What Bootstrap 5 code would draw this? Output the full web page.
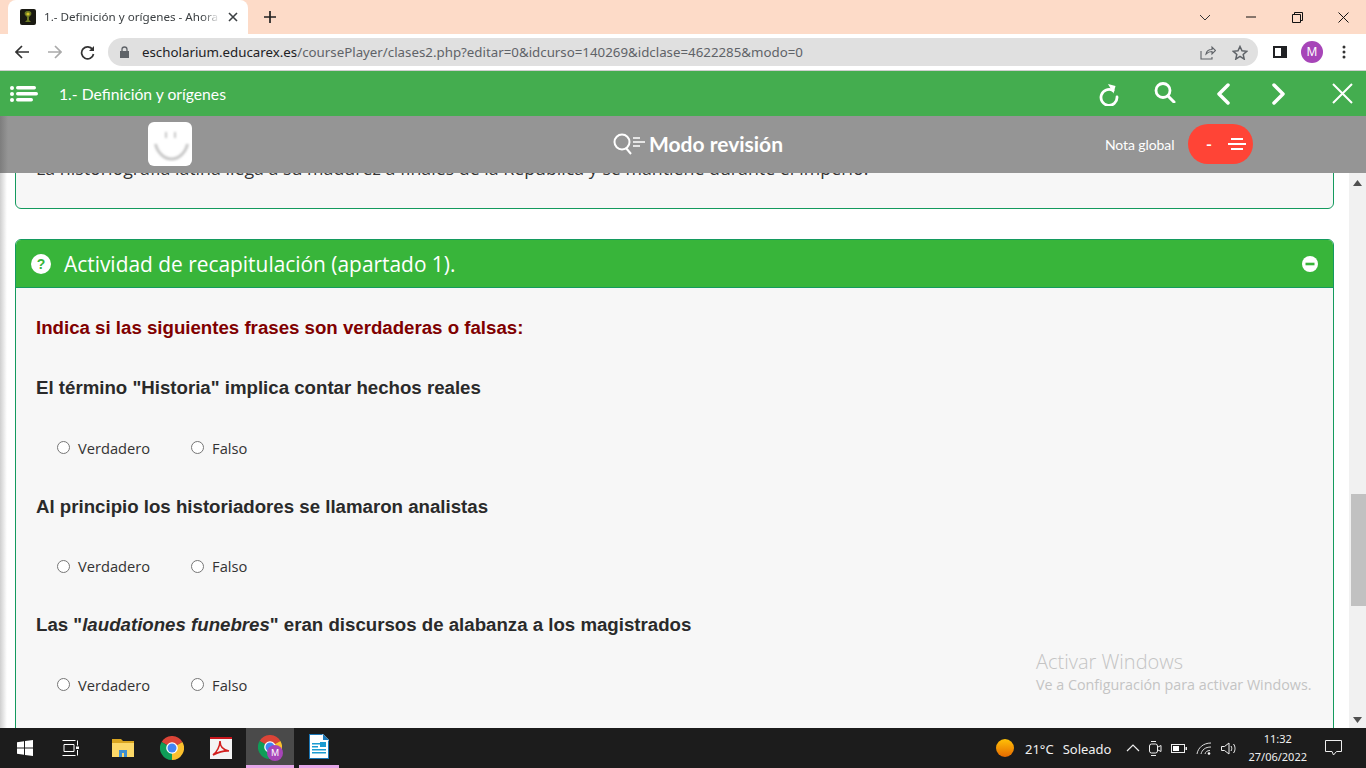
<!DOCTYPE html>
<html lang="es">
<head>
<meta charset="utf-8">
<title>1.- Definición y orígenes</title>
<link href="https://cdn.jsdelivr.net/npm/bootstrap@5.3.0/dist/css/bootstrap.min.css" rel="stylesheet">
<style>
html,body{height:100%;overflow:hidden;margin:0}
body{font-family:"Liberation Sans",sans-serif;background:#fff}
.app-root{width:1366px;height:768px}
.ui-font{font-family:"Noto Sans",sans-serif}
.tabstrip{height:34px;background:#fddbc8;flex:none}
.tab-active{position:relative;width:240px;margin-left:8px;height:34px;background:#fff;border-radius:8px 8px 0 0;padding-left:12px;font-size:11.65px;color:#3c4043;white-space:nowrap}
.tab-title{width:176px;overflow:hidden;margin-left:8px;-webkit-mask-image:linear-gradient(90deg,#000 90%,transparent)}
.tab-fav{width:16px;height:16px;background:#1a1a12;border-radius:2px;flex:none}
.new-tab{margin-left:15px}
.win-ctl{margin-left:auto;gap:0}
.win-ctl>span{width:46px;display:flex;justify-content:center}
.toolbar{height:37px;flex:none;background:#fff;border-bottom:1px solid #cfcfcf}
.tb-first{margin-left:6px}
.tb-fwd{margin-left:1px}
.tb-panel{margin-left:6px}
.tb-btn{width:32px;display:flex;justify-content:center;flex:none}
.omni{margin-left:5px;width:1150px;height:28px;background:#e0e0e0;border-radius:14px;font-size:13.3px;color:#5f6368;padding-left:12px;white-space:nowrap}
.omni b{font-weight:400;color:#202124}
.omni-url{margin-left:13px;padding-top:1px}
.omni-right{margin-left:auto;gap:16px;padding-right:10px}
.avatar{width:22px;height:22px;border-radius:50%;background:#a745b8;color:#fff;font-size:12px;line-height:22px;text-align:center}
.greenbar{height:45px;flex:none;background:#44ad4f;color:#fff;font-family:Lato,sans-serif;font-size:15.7px}
.greenbar-title{padding-top:2px}
.greenbar-menu{margin-left:10px;margin-right:21px}
.gb-tools{margin-left:auto;padding-right:13px}
.gb-reload{margin-top:2px}
.gb-search{margin-left:35px;margin-top:-3px}
.gb-prev{margin-left:40px}
.gb-next{margin-left:42px}
.gb-close{margin-left:46px}
.graybar{height:57px;flex:none;padding-bottom:1px;background:linear-gradient(90deg,#7d7d7d,#959595 8px);color:#fff;font-family:Lato,sans-serif;position:relative;z-index:2}
.smile{width:44px;height:44px;background:#fff;border-radius:6px;margin-left:148px;flex:none}
.mode-title{margin-left:421px;font-size:21px;font-weight:700;gap:3px;width:492px}
.nota{font-size:14px;letter-spacing:-.1px;width:70px;margin-right:13px;white-space:nowrap}
.nota-pill{width:65px;height:40px;background:#ff4436;border-radius:20px;font-size:16px;font-weight:700;padding-left:18px;gap:16px}
.viewport{min-height:0;position:relative}
.scroll-area{width:1349px;overflow:hidden;padding:0 15px;background:linear-gradient(90deg,#cfcfcf,#fff 7px)}
.first-card{margin-top:-40px;height:76px;background:#f7f7f7;border:1px solid #149a5e;border-radius:6px;font-family:"Open Sans",sans-serif;font-size:17.8px;line-height:24px;color:#333;padding:22px 20px 0;white-space:nowrap}
.activity{margin-top:30px;border:1px solid #149a5e;border-radius:6px 6px 0 0;background:#f7f7f7;height:600px}
.activity-head{height:48px;background:#38b53a;color:#fff;font-family:"Open Sans",sans-serif;font-size:20.9px;font-weight:500;padding:0 15px;border-bottom:1px solid #149a5e;border-radius:5px 5px 0 0}
.activity-title{margin-left:13px;padding-top:2px}
.activity-min{margin-left:auto}
.activity-body{padding:28px 20px 0;color:#222}
.lead-q{font-size:18.66px;font-weight:700;color:#800000;line-height:24px;margin-bottom:36px}
.q-text{font-size:18.66px;font-weight:700;line-height:24px;color:#2a2a2a}
.q-opts{margin:35.500px 0 35px 21px;height:24px;font-family:"Open Sans",sans-serif;font-size:14.67px;color:#333}
.q-opt{margin-right:41px;gap:8px}
.radio-mini{width:13px;height:13px;margin:0;background:#fff;border:1px solid #767676;flex:none}
.scrollbar{width:17px;background:#f1f1f1;flex:none;padding-top:7px}
.sb-thumb{width:15px;height:112px;background:#c1c1c1;margin:308px 0 0 1px}
.sb-bottom{margin-top:auto;padding-bottom:5px}
.watermark{position:absolute;left:1036px;top:476px;font-family:"Open Sans",sans-serif;color:#c4c4c4;pointer-events:none;white-space:nowrap}
.wm-a{font-size:20px;line-height:25px;font-weight:300}
.wm-b{font-size:14.3px;line-height:21px}
.taskbar{height:40px;flex:none;background:#1c1c1c;color:#f0f0f0;font-size:13px}
.task-slot{width:49px;height:40px;display:flex;align-items:center;justify-content:center;flex:none}
.task-view{padding-right:5px}
.task-on{width:48px;margin-left:1px;background:#4a4a4a;border-bottom:3px solid #e5a6e8}
.task-open{width:40px;margin-left:5px;border-bottom:3px solid #e5a6e8}
.tray{margin-left:auto;padding-right:24px}
.tray-temp{margin-left:11px;margin-right:9px;padding-top:3px}
.tray-cond{margin-right:15px;padding-top:3px}
.tray-icons{gap:9px;margin-right:11px}
.clock{font-size:11px;line-height:18px;text-align:center;margin-right:18px}
</style>
</head>
<body>
<svg width="0" height="0" class="position-absolute">
  <symbol id="chrome" viewBox="0 0 24 24">
    <path fill="#db4437" d="M12 12L1.6 6A12 12 0 0 1 22.4 6Z"/>
    <path fill="#0f9d58" d="M12 12L1.6 6A12 12 0 0 0 12 24Z"/>
    <path fill="#fbc02d" d="M12 12L22.4 6A12 12 0 0 1 12 24Z"/>
    <circle cx="12" cy="12" r="5.8" fill="#fff"/><circle cx="12" cy="12" r="4.5" fill="#4285f4"/>
  </symbol>
</svg>
<div class="app-root d-flex flex-column">

  <div class="tabstrip d-flex align-items-center">
    <div class="tab-active d-flex align-items-center ui-font">
      <svg class="tab-fav" viewBox="0 0 16 16"><path fill="#6d7a24" d="M8 2c3 0 4 2 3 4L9 8v3l2 2H5l2-2V8L5 6C4 4 5 2 8 2z"/><circle cx="8" cy="5" r="1.6" fill="#d8c528"/></svg>
      <span class="tab-title">1.- Definición y orígenes - Ahora</span>
      <svg width="10" height="10" viewBox="0 0 10 10" class="ms-2"><path d="M1 1l8 8M9 1l-8 8" stroke="#3c4043" stroke-width="1.6"/></svg>
    </div>
    <svg class="new-tab" width="14" height="14" viewBox="0 0 14 14"><path d="M7 1v12M1 7h12" stroke="#222" stroke-width="1.7"/></svg>
    <div class="win-ctl d-flex align-items-center">
      <span><svg width="12" height="7" viewBox="0 0 12 7"><path d="M1 1l5 5 5-5" fill="none" stroke="#333"/></svg></span>
      <span><svg width="10" height="2" viewBox="0 0 10 2"><path d="M0 1h10" stroke="#111"/></svg></span>
      <span><svg width="11" height="11" viewBox="0 0 11 11"><path d="M.5 2.5h8v8h-8zM2.5 2.5v-2h8v8h-2" fill="none" stroke="#111"/></svg></span>
      <span><svg width="11" height="11" viewBox="0 0 11 11"><path d="M.5.5l10 10M10.500.5l-10 10" stroke="#111"/></svg></span>
    </div>
  </div>

  <div class="toolbar d-flex align-items-center ui-font">
    <span class="tb-btn tb-first"><svg width="14" height="14" viewBox="0 0 14 14"><path d="M7 1L1 7l6 6M1 7h13" fill="none" stroke="#333" stroke-width="1.7"/></svg></span>
    <span class="tb-btn tb-fwd"><svg width="14" height="14" viewBox="0 0 14 14"><path d="M7 1l6 6-6 6M13 7H0" fill="none" stroke="#aaa" stroke-width="1.7"/></svg></span>
    <span class="tb-btn"><svg width="15" height="15" viewBox="0 0 15 15"><path d="M12.6 4.500A6 6 0 1 0 13.500 9" fill="none" stroke="#333" stroke-width="1.7"/><path fill="#333" d="M14 1v5H9z"/></svg></span>
    <div class="omni d-flex align-items-center">
      <svg width="9" height="12" viewBox="0 0 9 12"><path fill="#5f6368" d="M0 5h9v7H0z"/><path d="M2 5V3.500a2.500 2.500 0 0 1 5 0V5" fill="none" stroke="#5f6368" stroke-width="1.300"/></svg>
      <span class="omni-url"><b>escholarium.educarex.es</b>/coursePlayer/clases2.php?editar=0&amp;idcurso=140269&amp;idclase=4622285&amp;modo=0</span>
      <div class="omni-right d-flex align-items-center">
        <svg width="16" height="15" viewBox="0 0 16 15"><path d="M1 6v8h11v-2M6 9c.5-3 3-4.500 6-4.500V2l3.500 3.500L12 9V6.500C9.500 6.500 7.500 7.500 6 9z" fill="none" stroke="#5f6368" stroke-width="1.100"/></svg>
        <svg width="16" height="15" viewBox="0 0 16 15"><path d="M8 1.500l2 4.300 4.700.5-3.500 3.200 1 4.600L8 11.300l-4.200 2.800 1-4.600L1.300 6.300 6 5.800z" fill="none" stroke="#5f6368" stroke-width="1.500"/></svg>
      </div>
    </div>
    <span class="tb-btn tb-panel"><svg width="14" height="12" viewBox="0 0 14 12"><path fill="#202124" fill-rule="evenodd" d="M0 0h14v12H0zM2 2v8h6V2z"/></svg></span>
    <span class="tb-btn"><span class="avatar">M</span></span>
    <span class="tb-btn"><svg width="4" height="14" viewBox="0 0 4 14"><circle cx="2" cy="2" r="1.500" fill="#333"/><circle cx="2" cy="7" r="1.500" fill="#333"/><circle cx="2" cy="12" r="1.500" fill="#333"/></svg></span>
  </div>

  <div class="greenbar d-flex align-items-center">
    <svg class="greenbar-menu" width="28" height="16" viewBox="0 0 28 16"><g fill="#fff"><circle cx="2" cy="2" r="2"/><circle cx="2" cy="8" r="2"/><circle cx="2" cy="14" r="2"/><rect x="6" y="0" width="20" height="3.500" rx="1.700"/><rect x="6" y="6" width="22" height="3.500" rx="1.700"/><rect x="6" y="12" width="17" height="3.500" rx="1.700"/></g></svg>
    <span class="greenbar-title">1.- Definición y orígenes</span>
    <div class="gb-tools d-flex align-items-center">
      <svg class="gb-reload" width="20" height="22" viewBox="0 0 20 22"><path d="M14 6.500A8 8 0 1 0 18 13" fill="none" stroke="#fff" stroke-width="2.800" stroke-linecap="round"/><path fill="#fff" d="M9 0l7.500 2-2 7.500z"/></svg>
      <svg class="gb-search" width="22" height="21" viewBox="0 0 22 21"><circle cx="9" cy="8.500" r="7" fill="none" stroke="#fff" stroke-width="2.800"/><path d="M14 14l6 6" stroke="#fff" stroke-width="3" stroke-linecap="round"/></svg>
      <svg class="gb-prev" width="14" height="22" viewBox="0 0 14 22"><path d="M12 2L3 11l9 9" fill="none" stroke="#fff" stroke-width="3.500" stroke-linecap="round" stroke-linejoin="round"/></svg>
      <svg class="gb-next" width="14" height="22" viewBox="0 0 14 22"><path d="M2 2l9 9-9 9" fill="none" stroke="#fff" stroke-width="3.500" stroke-linecap="round" stroke-linejoin="round"/></svg>
      <svg class="gb-close" width="21" height="21" viewBox="0 0 21 21"><path d="M1 1l19 19M20 1L1 20" stroke="#fff" stroke-width="2"/></svg>
    </div>
  </div>

  <div class="graybar d-flex align-items-center">
    <svg class="smile" viewBox="0 0 44 44"><defs><filter id="sb"><feGaussianBlur stdDeviation=".8"/></filter></defs><g filter="url(#sb)" fill="none" stroke="#c8c8c8"><path d="M18 10v6M27 10v6" stroke-width="2"/><path d="M7.500 22c2 9 9 15 16 15s14-6 16-15" stroke-width="3"/></g></svg>
    <div class="mode-title d-flex align-items-center">
      <svg width="33" height="24" viewBox="0 0 33 24"><circle cx="9" cy="10" r="7.500" fill="none" stroke="#fff" stroke-width="2"/><path d="M13 16l5 6" stroke="#fff" stroke-width="2"/><path d="M20 6h7M20 10h12M20 14h7" stroke="#fff" stroke-width="1.500"/></svg>
      <span>Modo revisión</span>
    </div>
    <span class="nota">Nota global</span>
    <div class="nota-pill d-flex align-items-center"><span>-</span>
      <svg width="18" height="12" viewBox="0 0 18 12"><path d="M3 1h12M0 6h18M3 11h12" stroke="#fff" stroke-width="1.800"/></svg>
    </div>
  </div>

  <div class="viewport flex-grow-1 d-flex overflow-hidden">
    <div class="scroll-area flex-grow-1">
      <div class="first-card">La historiografía latina llega a su madurez a finales de la República y se mantiene durante el Imperio.</div>
      <div class="activity">
        <div class="activity-head d-flex align-items-center">
          <svg width="20" height="20" viewBox="0 0 20 20"><circle cx="10" cy="10" r="10" fill="#fff"/><text x="10" y="15" text-anchor="middle" font-family="Liberation Sans" font-weight="700" font-size="14" fill="#38b53a">?</text></svg>
          <span class="activity-title">Actividad de recapitulación (apartado 1).</span>
          <svg class="activity-min" width="16" height="16" viewBox="0 0 16 16"><circle cx="8" cy="8" r="8" fill="#fff"/><rect x="3.500" y="6.700" width="9" height="2.600" fill="#38b53a"/></svg>
        </div>
        <div class="activity-body">
          <p class="lead-q">Indica si las siguientes frases son verdaderas o falsas:</p>
          <p class="q-text mb-0">El término "Historia" implica contar hechos reales</p>
          <div class="q-opts d-flex align-items-center">
            <label class="q-opt d-flex align-items-center"><input type="radio" name="q1" class="form-check-input radio-mini">Verdadero</label>
            <label class="q-opt d-flex align-items-center"><input type="radio" name="q1" class="form-check-input radio-mini">Falso</label>
          </div>
          <p class="q-text mb-0">Al principio los historiadores se llamaron analistas</p>
          <div class="q-opts d-flex align-items-center">
            <label class="q-opt d-flex align-items-center"><input type="radio" name="q2" class="form-check-input radio-mini">Verdadero</label>
            <label class="q-opt d-flex align-items-center"><input type="radio" name="q2" class="form-check-input radio-mini">Falso</label>
          </div>
          <p class="q-text mb-0">Las "<i>laudationes funebres</i>" eran discursos de alabanza a los magistrados</p>
          <div class="q-opts d-flex align-items-center">
            <label class="q-opt d-flex align-items-center"><input type="radio" name="q3" class="form-check-input radio-mini">Verdadero</label>
            <label class="q-opt d-flex align-items-center"><input type="radio" name="q3" class="form-check-input radio-mini">Falso</label>
          </div>
        </div>
      </div>
    </div>
    <div class="scrollbar d-flex flex-column align-items-center">
      <svg width="9" height="6" viewBox="0 0 9 6"><path fill="#505050" d="M4.500 0L9 6H0z"/></svg>
      <div class="sb-thumb"></div>
      <div class="sb-bottom"><svg width="9" height="6" viewBox="0 0 9 6" class="d-block"><path fill="#505050" d="M4.500 6L9 0H0z"/></svg></div>
    </div>
    <div class="watermark">
      <div class="wm-a">Activar Windows</div>
      <div class="wm-b">Ve a Configuración para activar Windows.</div>
    </div>
  </div>

  <div class="taskbar d-flex align-items-center ui-font">
    <span class="task-slot"><svg width="16" height="16" viewBox="0 0 16 16"><path fill="#fff" d="M0 2.300l7-1v6.300H0zM8 1.100L16 0v7.600H8zM0 8.400h7v6.300l-7-1zM8 8.400h8V16l-8-1.100z"/></svg></span>
    <span class="task-slot task-view"><svg width="18" height="16" viewBox="0 0 18 16"><path d="M2 4.500h10v7H2zM.5 .5h13M.5 15.500h13M15.500 .5v5M15.500 10v5.500" fill="none" stroke="#fff"/><rect x="14" y="6.500" width="3" height="2.500" fill="#fff"/></svg></span>
    <span class="task-slot"><svg width="22" height="18" viewBox="0 0 22 18"><path fill="#d9a520" d="M0 0h9l2 2h11v3H0z"/><path fill="#fcd868" d="M0 4h22v14H0z"/><path fill="#3d8fd1" d="M7 11h8v7h-3v-4h-2v4H7z"/></svg></span>
    <span class="task-slot"><svg width="24" height="24"><use href="#chrome"/></svg></span>
    <span class="task-slot"><svg width="22" height="22" viewBox="0 0 22 22"><path fill="#f4f4f4" d="M0 0h22v22H0z"/><path fill="#c7161d" d="M0 0h22v2H0z"/><path d="M3 18c4-3 7-9 7-14 0 5 3 9 9 10-5-.5-10 1-16 4z" fill="none" stroke="#d3201f" stroke-width="1.600"/></svg></span>
    <span class="task-slot task-on"><span class="position-relative d-block" style="width:24px;height:24px"><svg width="24" height="24" class="d-block"><use href="#chrome"/></svg><span class="avatar position-absolute top-50 start-50" style="width:16px;height:16px;font-size:9px;line-height:16px;margin:-2px 0 0 -3px">M</span></span></span>
    <span class="task-slot task-open"><svg width="20" height="25" viewBox="0 0 20 25"><path fill="#fff" d="M0 0h14l6 6v19H0z"/><path fill="#1b78b8" d="M0 0h14l-1 1H1v23h18V7l1-1v19H0z"/><path fill="#1b78b8" d="M14 0l6 6h-6z"/><path fill="#1b9bd1" d="M3 9h8v1.500H3zM3 12h6v1.500H3zM3 15h14v1.500H3zM3 18h14v1.500H3zM11 8h6v5h-6z"/></svg></span>
    <div class="tray d-flex align-items-center">
      <svg width="18" height="18" viewBox="0 0 18 18"><defs><linearGradient id="sun" x1="0" y1="0" x2="0" y2="1"><stop offset="0" stop-color="#ffc107"/><stop offset="1" stop-color="#e66a00"/></linearGradient></defs><circle cx="9" cy="9" r="9" fill="url(#sun)"/></svg>
      <span class="tray-temp">21°C</span>
      <span class="tray-cond">Soleado</span>
      <div class="tray-icons d-flex align-items-center">
        <svg width="14" height="8" viewBox="0 0 14 8"><path d="M1 7l6-6 6 6" fill="none" stroke="#eee" stroke-width="1.200"/></svg>
        <svg width="13" height="17" viewBox="0 0 13 17"><rect x=".5" y="4" width="8" height="9" rx="2" fill="none" stroke="#eee"/><path d="M9 7l3-1.500v6L9 10M2 1.500h5M2 15.500h5" fill="none" stroke="#eee"/></svg>
        <svg width="16" height="9" viewBox="0 0 16 9"><rect x=".5" y=".5" width="13" height="8" fill="none" stroke="#eee"/><rect x="2" y="2" width="6" height="5" fill="#fff"/><rect x="14.500" y="3" width="1.500" height="3" fill="#eee"/></svg>
        <svg width="16" height="13" viewBox="0 0 16 13"><path d="M1 12C2 6 7 1 15 1M5 12c1-4 4-7 10-7M9 12c.5-2 2-3.500 5-3.500" fill="none" stroke="#ddd"/><circle cx="13" cy="11.500" r="1.300" fill="#fff"/></svg>
        <svg width="16" height="13" viewBox="0 0 16 13"><path d="M.5 4.500h3L8 1v11L3.500 8.500h-3z" fill="none" stroke="#eee"/><path d="M10 4c1 1.500 1 3.500 0 5M12.500 2c2 2.500 2 6.500 0 9" fill="none" stroke="#eee"/></svg>
      </div>
      <div class="clock"><div>11:32</div><div>27/06/2022</div></div>
      <svg width="17" height="16" viewBox="0 0 17 16"><path d="M.5.5h16v11h-5L8.500 15l-1.500-3.500H.5z" fill="none" stroke="#eee"/></svg>
    </div>
  </div>
</div>
</body>
</html>
